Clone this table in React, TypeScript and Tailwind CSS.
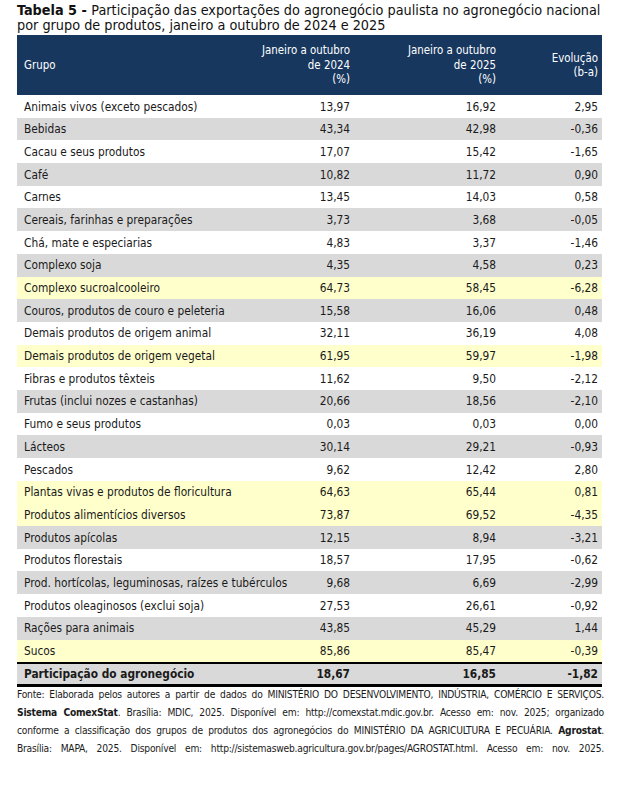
import React from 'react';

type Row = { grupo: string; a: string; b: string; evo: string; tone: 'white' | 'gray' | 'yellow' };

const rows: Row[] = [
  { grupo: 'Animais vivos (exceto pescados)', a: '13,97', b: '16,92', evo: '2,95', tone: 'white' },
  { grupo: 'Bebidas', a: '43,34', b: '42,98', evo: '-0,36', tone: 'gray' },
  { grupo: 'Cacau e seus produtos', a: '17,07', b: '15,42', evo: '-1,65', tone: 'white' },
  { grupo: 'Café', a: '10,82', b: '11,72', evo: '0,90', tone: 'gray' },
  { grupo: 'Carnes', a: '13,45', b: '14,03', evo: '0,58', tone: 'white' },
  { grupo: 'Cereais, farinhas e preparações', a: '3,73', b: '3,68', evo: '-0,05', tone: 'gray' },
  { grupo: 'Chá, mate e especiarias', a: '4,83', b: '3,37', evo: '-1,46', tone: 'white' },
  { grupo: 'Complexo soja', a: '4,35', b: '4,58', evo: '0,23', tone: 'gray' },
  { grupo: 'Complexo sucroalcooleiro', a: '64,73', b: '58,45', evo: '-6,28', tone: 'yellow' },
  { grupo: 'Couros, produtos de couro e peleteria', a: '15,58', b: '16,06', evo: '0,48', tone: 'gray' },
  { grupo: 'Demais produtos de origem animal', a: '32,11', b: '36,19', evo: '4,08', tone: 'white' },
  { grupo: 'Demais produtos de origem vegetal', a: '61,95', b: '59,97', evo: '-1,98', tone: 'yellow' },
  { grupo: 'Fibras e produtos têxteis', a: '11,62', b: '9,50', evo: '-2,12', tone: 'white' },
  { grupo: 'Frutas (inclui nozes e castanhas)', a: '20,66', b: '18,56', evo: '-2,10', tone: 'gray' },
  { grupo: 'Fumo e seus produtos', a: '0,03', b: '0,03', evo: '0,00', tone: 'white' },
  { grupo: 'Lácteos', a: '30,14', b: '29,21', evo: '-0,93', tone: 'gray' },
  { grupo: 'Pescados', a: '9,62', b: '12,42', evo: '2,80', tone: 'white' },
  { grupo: 'Plantas vivas e produtos de floricultura', a: '64,63', b: '65,44', evo: '0,81', tone: 'yellow' },
  { grupo: 'Produtos alimentícios diversos', a: '73,87', b: '69,52', evo: '-4,35', tone: 'yellow' },
  { grupo: 'Produtos apícolas', a: '12,15', b: '8,94', evo: '-3,21', tone: 'gray' },
  { grupo: 'Produtos florestais', a: '18,57', b: '17,95', evo: '-0,62', tone: 'white' },
  { grupo: 'Prod. hortícolas, leguminosas, raízes e tubérculos', a: '9,68', b: '6,69', evo: '-2,99', tone: 'gray' },
  { grupo: 'Produtos oleaginosos (exclui soja)', a: '27,53', b: '26,61', evo: '-0,92', tone: 'white' },
  { grupo: 'Rações para animais', a: '43,85', b: '45,29', evo: '1,44', tone: 'gray' },
  { grupo: 'Sucos', a: '85,86', b: '85,47', evo: '-0,39', tone: 'yellow' },
];

const toneClass = {
  white: 'bg-white',
  gray: 'bg-[#d9d9d9]',
  yellow: 'bg-[#ffffcc]',
};

const cols = 'grid grid-cols-[minmax(0,1fr)_100px_146px_102px]';

export default function App() {
  return (
    <div className="w-[621px] h-[789px] bg-white text-[#1a1a1a] px-[17px] pt-[3px] font-['DejaVu_Sans_Condensed','DejaVu_Sans',sans-serif]">
      <h1 className="text-[14.3px] leading-[15px] text-[#111] whitespace-nowrap">
        <span className="font-bold">Tabela 5 - </span>
        Participação das exportações do agronegócio paulista no agronegócio nacional
        <br />
        por grupo de produtos, janeiro a outubro de 2024 e 2025
      </h1>

      <div className="mt-[2px] w-[585px] text-[11.8px]">
        {/* cabeçalho */}
        <div className={`${cols} h-[60px] bg-[#17375e] text-white text-[11.4px] leading-[14.5px]`}>
          <div className="flex items-center pl-[7px]">Grupo</div>
          <div className="flex flex-col items-end justify-center pr-[4px] text-right">
            <span>Janeiro a outubro</span>
            <span>de 2024</span>
            <span>(%)</span>
          </div>
          <div className="flex flex-col items-end justify-center pr-[4px] text-right">
            <span>Janeiro a outubro</span>
            <span>de 2025</span>
            <span>(%)</span>
          </div>
          <div className="flex flex-col items-end justify-center pr-[4px] text-right">
            <span>Evolução</span>
            <span>(b-a)</span>
          </div>
        </div>

        {rows.map((r) => (
          <div key={r.grupo} className={`${cols} h-[22.7px] pt-[2px] items-center ${toneClass[r.tone]}`}>
            <div className="pl-[7px] whitespace-nowrap">{r.grupo}</div>
            <div className="pr-[4px] text-right">{r.a}</div>
            <div className="pr-[4px] text-right">{r.b}</div>
            <div className="pr-[4px] text-right">{r.evo}</div>
          </div>
        ))}

        <div className={`${cols} h-[25px] pt-px items-center bg-[#d9d9d9] font-bold border-t-2 border-b-[3px] border-black`}>
          <div className="pl-[7px]">Participação do agronegócio</div>
          <div className="pr-[4px] text-right">18,67</div>
          <div className="pr-[4px] text-right">16,85</div>
          <div className="pr-[4px] text-right">-1,82</div>
        </div>
      </div>

      <div className="mt-[-1px] w-[587px] text-[10.2px] tracking-[-0.22px] leading-[18px] text-justify [text-align-last:justify]">
        <p className="whitespace-nowrap">
          Fonte: Elaborada pelos autores a partir de dados do MINISTÉRIO DO DESENVOLVIMENTO, INDÚSTRIA, COMÉRCIO E SERVIÇOS.
        </p>
        <p className="whitespace-nowrap">
          <b>Sistema ComexStat</b>. Brasília: MDIC, 2025. Disponível em: http://comexstat.mdic.gov.br. Acesso em: nov. 2025; organizado
        </p>
        <p className="whitespace-nowrap">
          conforme a classificação dos grupos de produtos dos agronegócios do MINISTÉRIO DA AGRICULTURA E PECUÁRIA. <b>Agrostat</b>.
        </p>
        <p className="whitespace-nowrap">
          Brasília: MAPA, 2025. Disponível em: http://sistemasweb.agricultura.gov.br/pages/AGROSTAT.html. Acesso em: nov. 2025.
        </p>
      </div>
    </div>
  );
}
